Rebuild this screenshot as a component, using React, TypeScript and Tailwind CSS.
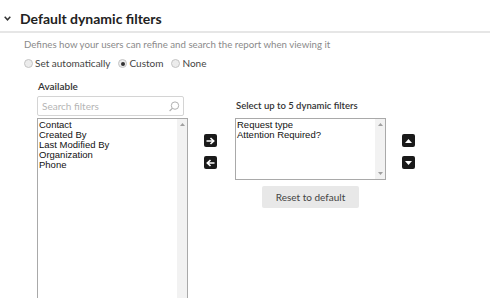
import React from "react";

function Radio({ checked, label }: { checked?: boolean; label: string }) {
  return (
    <label className="flex items-center gap-[2px] mr-[8px]">
      <span className="w-[9px] h-[9px] rounded-full border border-[#c4c4c4] bg-[#ececec] flex items-center justify-center">
        {checked && <span className="w-[4px] h-[4px] rounded-full bg-[#333]" />}
      </span>
      <span>{label}</span>
    </label>
  );
}

function Scrollbar() {
  return (
    <div className="w-[10px] bg-[#f2f2f2] flex flex-col justify-between items-center py-[4px]">
      <svg width="5" height="3" viewBox="0 0 5 3">
        <path d="M0 3 L2.5 0 L5 3 Z" fill="#a0a0a0" />
      </svg>
      <svg width="5" height="3" viewBox="0 0 5 3">
        <path d="M0 0 L2.5 3 L5 0 Z" fill="#a0a0a0" />
      </svg>
    </div>
  );
}

function IconButton({ children }: { children: React.ReactNode }) {
  return (
    <button className="w-[13px] h-[13px] rounded-[2px] bg-[#1a1a1a] flex items-center justify-center">
      {children}
    </button>
  );
}

export default function App() {
  const available = ["Contact", "Created By", "Last Modified By", "Organization", "Phone"];
  const selected = ["Request type", "Attention Required?"];

  return (
    <div className="w-[490px] h-[298px] overflow-hidden bg-white font-['Lato',sans-serif]">
      <div className="h-[33px] flex items-start pt-[10px] border-b-2 border-[#e6e6e6]">
        <svg className="ml-[4px] mt-[6px]" width="7" height="5" viewBox="0 0 7 5">
          <path d="M0.7 0.8 L3.5 3.8 L6.3 0.8" stroke="#333" strokeWidth="1.5" fill="none" />
        </svg>
        <span className="ml-[9px] text-[14px] leading-[17px] font-bold text-[#222]">Default dynamic filters</span>
      </div>

      <p className="pl-[24px] mt-[4px] text-[9.7px] leading-[14px] text-[#8a8a8a]">
        Defines how your users can refine and search the report when viewing it
      </p>

      <div className="pl-[24px] mt-[6px] flex items-center text-[10px] leading-[13px] text-[#444]">
        <Radio label="Set automatically" />
        <Radio checked label="Custom" />
        <Radio label="None" />
      </div>

      <div className="flex items-start pl-[37px] mt-[10px]">
        <div className="w-[151px] flex flex-col">
          <span className="pl-[1px] text-[10px] leading-[13px] font-semibold text-[#333]">Available</span>
          <div className="mt-[3px] w-[147px] h-[20px] border border-[#d4d4d4] rounded-[2px] flex items-center justify-between pl-[4px] pr-[3px]">
            <span className="text-[10px] text-[#b5b5b5]">Search filters</span>
            <svg width="11" height="11" viewBox="0 0 11 11">
              <circle cx="6" cy="4.6" r="3.7" stroke="#b0b0b0" strokeWidth="1" fill="none" />
              <path d="M3.3 7.3 L0.6 10" stroke="#b0b0b0" strokeWidth="1.2" />
            </svg>
          </div>
          <div className="mt-[2px] h-[190px] border border-[#a9a9a9] flex">
            <ul className="flex-1 pt-[1px] pl-[1px] font-['Liberation_Sans',sans-serif] text-[9.5px] leading-[10px] text-[#111]">
              {available.map((item) => (
                <li key={item}>{item}</li>
              ))}
            </ul>
            <Scrollbar />
          </div>
        </div>

        <div className="ml-[16px] mt-[54px] flex flex-col gap-[9px]">
          <IconButton>
            <svg width="9" height="8" viewBox="0 0 9 8">
              <path d="M0.5 4 H7.5 M4.5 1 L7.7 4 L4.5 7" stroke="#fff" strokeWidth="1.6" fill="none" />
            </svg>
          </IconButton>
          <IconButton>
            <svg width="9" height="8" viewBox="0 0 9 8">
              <path d="M8.5 4 H1.5 M4.5 1 L1.3 4 L4.5 7" stroke="#fff" strokeWidth="1.6" fill="none" />
            </svg>
          </IconButton>
        </div>

        <div className="ml-[18px] mt-[19px] w-[151px] flex flex-col items-center">
          <span className="self-start pl-[1px] text-[9.5px] leading-[13px] font-semibold text-[#333]">
            Select up to 5 dynamic filters
          </span>
          <div className="self-stretch mt-[6px] h-[62px] border border-[#a9a9a9] flex">
            <ul className="flex-1 pt-[1px] pl-[1px] font-['Liberation_Sans',sans-serif] text-[9.5px] leading-[10px] text-[#111]">
              {selected.map((item) => (
                <li key={item}>{item}</li>
              ))}
            </ul>
            <Scrollbar />
          </div>
          <button className="mt-[6px] w-[97px] h-[22px] rounded-[2px] bg-[#e8e8e8] text-[10px] text-[#444]">
            Reset to default
          </button>
        </div>

        <div className="ml-[16px] mt-[54px] flex flex-col gap-[9px]">
          <IconButton>
            <svg width="7" height="4" viewBox="0 0 7 4">
              <path d="M0 4 L3.5 0 L7 4 Z" fill="#fff" />
            </svg>
          </IconButton>
          <IconButton>
            <svg width="7" height="4" viewBox="0 0 7 4">
              <path d="M0 0 L3.5 4 L7 0 Z" fill="#fff" />
            </svg>
          </IconButton>
        </div>
      </div>
    </div>
  );
}
